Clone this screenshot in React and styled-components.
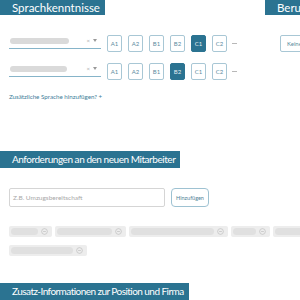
import React from "react"
import styled, { createGlobalStyle } from "styled-components"

const Global = createGlobalStyle`
  html, body {
    margin: 0;
    padding: 0;
    background: #fff;
    overflow: hidden;
  }
  body {
    font-family: Lato, "Open Sans", sans-serif;
  }
`

const Page = styled.div`
  width: 300px;
  height: 300px;
  overflow: hidden;
`

const TopRow = styled.div`
  display: flex;
  gap: 10px;
  width: 400px;
`

const Column = styled.section`
  width: ${props => props.width}px;
  flex-shrink: 0;
`

const Header = styled.div`
  width: fit-content;
  box-sizing: border-box;
  background: #2b7391;
  color: #fff;
  font-size: ${props => props.size || 10}px;
  letter-spacing: ${props => props.spacing || 0}px;
  line-height: ${props => props.height || 17}px;
  height: ${props => props.height || 17}px;
  padding: 0 5px 0 12px;
  white-space: nowrap;
  overflow: hidden;
`

const LangList = styled.div`
  display: flex;
  flex-direction: column;
  gap: 11px;
  margin-top: 20px;
  padding-left: 9px;
`

const LangRow = styled.div`
  display: flex;
  align-items: flex-start;
  gap: 6px;
`

const Select = styled.div`
  width: 92px;
  height: 14px;
  border-bottom: 1.5px solid #86b4c9;
  display: flex;
  align-items: center;
  padding: 0 0 2px 1px;
  box-sizing: border-box;
`

const Blur = styled.div`
  width: ${props => props.width}px;
  height: 6px;
  border-radius: 3px;
  background: #dadada;
`

const SelectIcons = styled.div`
  margin-left: auto;
  margin-right: 4px;
  display: flex;
  gap: 3px;
  align-items: center;
  font-size: 6px;
  color: #aaa;
`

const Caret = styled.span`
  width: 0;
  height: 0;
  border-left: 2.5px solid transparent;
  border-right: 2.5px solid transparent;
  border-top: 3px solid #999;
`

const Level = styled.div`
  width: 15px;
  height: 17px;
  box-sizing: border-box;
  border: 1px solid ${props => (props.active ? "#2b7391" : "#a8c7d5")};
  background: ${props => (props.active ? "#2b7391" : "#fff")};
  color: ${props => (props.active ? "#e4eef3" : "#5c8ba0")};
  border-radius: 2px;
  font-size: 6px;
  display: flex;
  align-items: center;
  justify-content: center;
`

const Dash = styled.span`
  align-self: center;
  width: 5px;
  height: 1px;
  background: #b8b8b8;
  margin-left: -1px;
`

const KeineButton = styled.div`
  margin-top: 20px;
  margin-left: 15px;
  height: 17px;
  width: 40px;
  box-sizing: border-box;
  border: 1px solid #a8c7d5;
  border-radius: 2px;
  font-size: 6px;
  color: #5c8ba0;
  display: flex;
  align-items: center;
  padding-left: 6px;
`

const AddLink = styled.div`
  margin: 13px 0 0 9px;
  font-size: 6.2px;
  line-height: 8px;
  color: #3d7d98;
`

const Section = styled.section`
  margin-top: ${props => props.top}px;
`

const InputRow = styled.div`
  display: flex;
  gap: 6px;
  margin: 20px 0 0 9px;
`

const Input = styled.div`
  width: 156px;
  height: 19px;
  box-sizing: border-box;
  border: 1px solid #d5d5d5;
  border-radius: 2px;
  font-size: 6.5px;
  color: #a8a8a8;
  display: flex;
  align-items: center;
  padding-left: 3px;
`

const AddButton = styled.div`
  width: 38px;
  height: 19px;
  box-sizing: border-box;
  border: 1px solid #9ec2d2;
  border-radius: 4px;
  font-size: 5.5px;
  color: #4f7f95;
  display: flex;
  align-items: center;
  justify-content: center;
`

const TagWrap = styled.div`
  display: flex;
  flex-wrap: wrap;
  column-gap: 3px;
  row-gap: 8px;
  margin: 19px 0 0 9px;
  width: 340px;
`

const Tag = styled.div`
  height: 11px;
  background: #ededed;
  border-radius: 2px;
  display: flex;
  align-items: center;
  padding: 0 4px 0 2px;
  gap: 3px;
`

const TagText = styled.div`
  width: ${props => props.width}px;
  height: 7px;
  border-radius: 3.5px;
  background: #e0e0e0;
`

const MinusCircle = () => (
  <svg width="7" height="7" viewBox="0 0 8 8">
    <circle cx="4" cy="4" r="3.3" fill="none" stroke="#c4c4c4" strokeWidth="0.9" />
    <line x1="2.4" y1="4" x2="5.6" y2="4" stroke="#c4c4c4" strokeWidth="0.9" />
  </svg>
)

const levels = ["A1", "A2", "B1", "B2", "C1", "C2"]
const languages = [
  { blur: 59, active: "C1" },
  { blur: 57, active: "B2" },
]
const tags = [27, 55, 83, 23, 40, 62]

export default function App() {
  return (
    <Page>
      <Global />
      <TopRow>
        <Column width={255}>
          <Header height={15} size={11.5}>Sprachkenntnisse</Header>
          <LangList>
            {languages.map((lang, i) => (
              <LangRow key={i}>
                <Select>
                  <Blur width={lang.blur} />
                  <SelectIcons>
                    <span>×</span>
                    <Caret />
                  </SelectIcons>
                </Select>
                {levels.map(l => (
                  <Level key={l} active={l === lang.active}>
                    {l}
                  </Level>
                ))}
                <Dash />
              </LangRow>
            ))}
          </LangList>
          <AddLink>Zusätzliche Sprache hinzufügen? +</AddLink>
        </Column>
        <Column width={100}>
          <Header height={15} size={11.5}>Berufserfahrung</Header>
          <KeineButton>Keine</KeineButton>
        </Column>
      </TopRow>

      <Section top={50}>
        <Header spacing={-0.45}>Anforderungen an den neuen Mitarbeiter</Header>
        <InputRow>
          <Input>Z.B. Umzugsbereitschaft</Input>
          <AddButton>Hinzufügen</AddButton>
        </InputRow>
        <TagWrap>
          {tags.map((w, i) => (
            <Tag key={i}>
              <TagText width={w} />
              <MinusCircle />
            </Tag>
          ))}
        </TagWrap>
      </Section>

      <Section top={27}>
        <Header spacing={-0.55}>Zusatz-Informationen zur Position und Firma</Header>
      </Section>
    </Page>
  )
}
